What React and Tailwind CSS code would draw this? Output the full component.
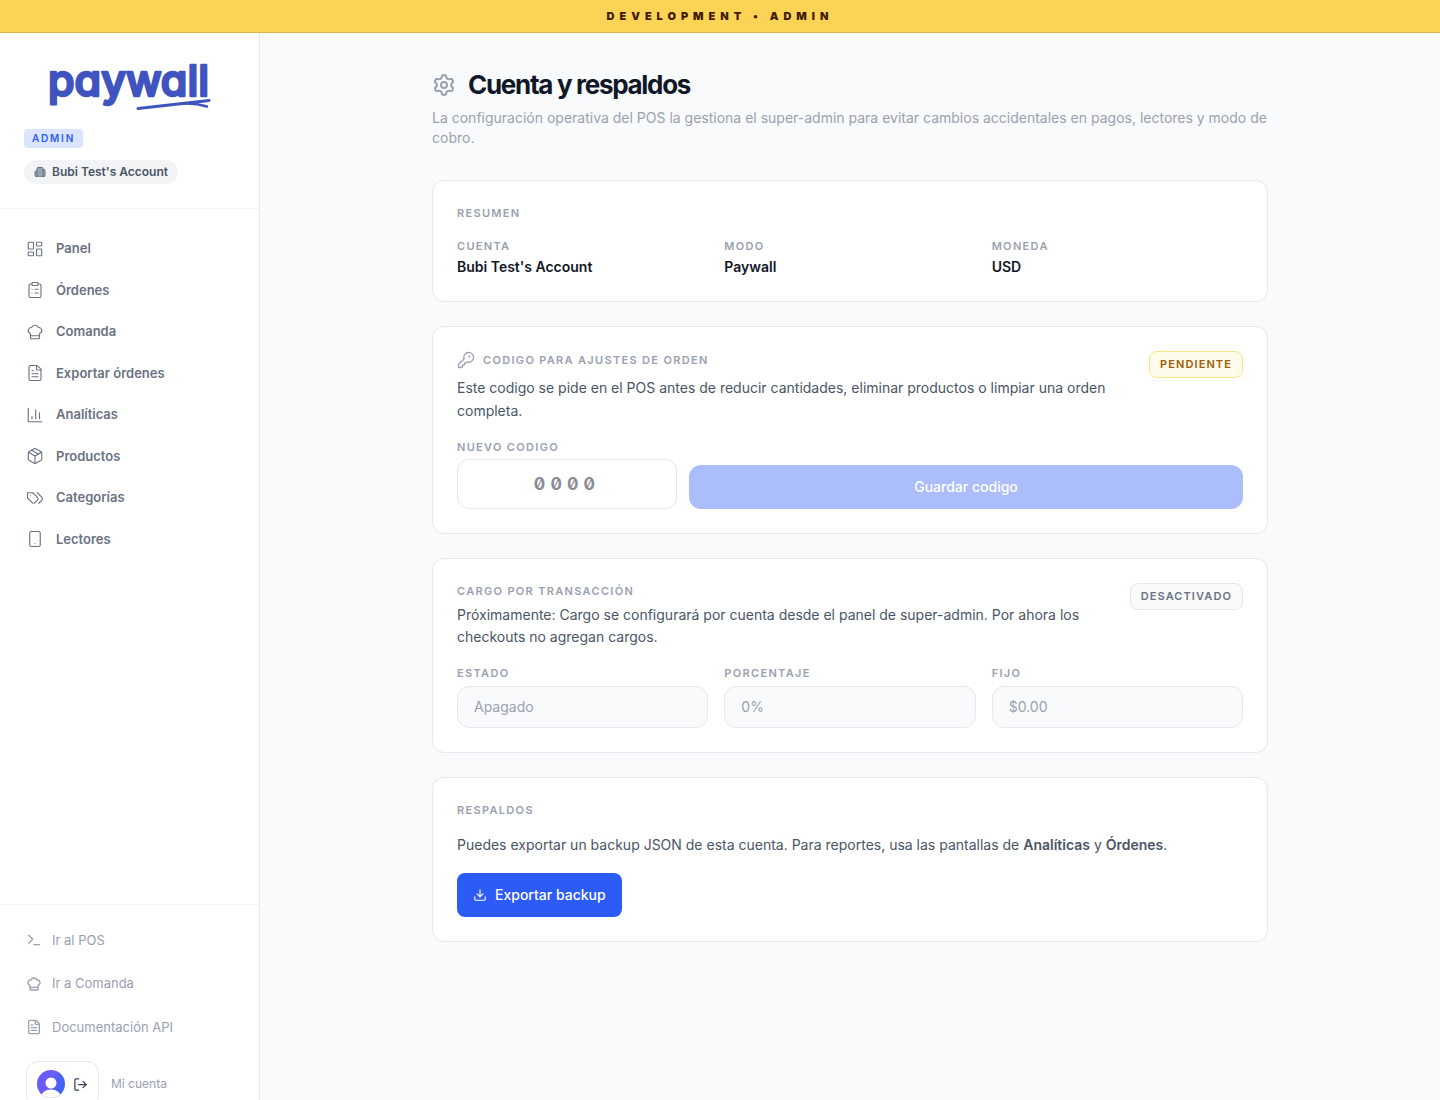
import {
  Building2,
  ChefHat,
  ClipboardList,
  Download,
  FileText,
  KeyRound,
  LayoutDashboard,
  LogOut,
  Package,
  Settings,
  Smartphone,
  Terminal,
} from 'lucide-react';

function ChartIcon({ size = 18, strokeWidth = 2 }) {
  return (
    <svg width={size} height={size} viewBox="0 0 24 24" fill="none" stroke="currentColor" strokeWidth={strokeWidth} strokeLinecap="round" strokeLinejoin="round">
      <path d="M3 3v18h18" />
      <path d="M18 17V9" />
      <path d="M13 17V5" />
      <path d="M8 17v-3" />
    </svg>
  );
}

function TagsIcon({ size = 18, strokeWidth = 2 }) {
  return (
    <svg width={size} height={size} viewBox="0 0 24 24" fill="none" stroke="currentColor" strokeWidth={strokeWidth} strokeLinecap="round" strokeLinejoin="round">
      <path d="M9 5H2v7l6.29 6.29c.94.94 2.48.94 3.42 0l3.58-3.58c.94-.94.94-2.48 0-3.42L9 5Z" />
      <path d="M6 9.01V9" />
      <path d="m15 5 6.3 6.3a2.4 2.4 0 0 1 0 3.4L17 19" />
    </svg>
  );
}

const navItems = [
  { label: 'Panel', icon: LayoutDashboard },
  { label: 'Órdenes', icon: ClipboardList },
  { label: 'Comanda', icon: ChefHat },
  { label: 'Exportar órdenes', icon: FileText },
  { label: 'Analíticas', icon: ChartIcon },
  { label: 'Productos', icon: Package },
  { label: 'Categorías', icon: TagsIcon },
  { label: 'Lectores', icon: Smartphone },
];

const footerItems = [
  { label: 'Ir al POS', icon: Terminal },
  { label: 'Ir a Comanda', icon: ChefHat },
  { label: 'Documentación API', icon: FileText },
];

const summary = [
  { label: 'Cuenta', value: "Bubi Test's Account" },
  { label: 'Modo', value: 'Paywall' },
  { label: 'Moneda', value: 'USD' },
];

const feeFields = [
  { id: 'estado', label: 'Estado', value: 'Apagado' },
  { id: 'porcentaje', label: 'Porcentaje', value: '0%' },
  { id: 'fijo', label: 'Fijo', value: '$0.00' },
];

function Logo() {
  return (
    <svg viewBox="0 0 168 56" className="mx-auto h-14 w-[168px] overflow-visible" role="img" aria-label="paywall">
      <text
        x="2"
        y="39"
        fontSize="43"
        fill="#3f54be"
        stroke="#3f54be"
        strokeWidth="2.5"
        strokeLinejoin="round"
        className="font-['Inter',sans-serif] font-medium [font-feature-settings:'cv11']"
      >
        paywall
      </text>
      <g fill="none" stroke="#3f54be" strokeLinecap="round">
        <path d="M92 51.5 L163 43.5" strokeWidth="3" />
        <path d="M138 46.5 Q150 46 161 49.5" strokeWidth="2.5" />
      </g>
    </svg>
  );
}

function Avatar() {
  return (
    <svg viewBox="0 0 28 28" className="size-7" aria-hidden="true">
      <defs>
        <linearGradient id="avatar-fill" x1="0" y1="0" x2="1" y2="0.4">
          <stop offset="0.5" stopColor="#6c5cf7" />
          <stop offset="1" stopColor="#3b63f6" />
        </linearGradient>
        <clipPath id="avatar-clip">
          <circle cx="14" cy="14" r="14" />
        </clipPath>
      </defs>
      <g clipPath="url(#avatar-clip)">
        <rect width="28" height="28" fill="url(#avatar-fill)" />
        <circle cx="14" cy="13" r="5.5" fill="#fff" />
        <ellipse cx="14" cy="27" rx="10" ry="7.5" fill="#fff" />
      </g>
    </svg>
  );
}

function Label({ as: Tag = 'p', className = '', ...props }) {
  return (
    <Tag
      className={`block text-[11px] leading-normal font-semibold tracking-[0.12em] text-gray-400 uppercase ${className}`}
      {...props}
    />
  );
}

function Card({ children }) {
  return <section className="rounded-xl border border-gray-200 bg-white p-6">{children}</section>;
}

function Sidebar() {
  return (
    <aside className="flex h-screen w-[260px] shrink-0 flex-col border-r border-gray-200 bg-white">
      <div className="flex flex-col items-start border-b border-gray-100 p-6">
        <Logo />
        <span className="mt-4 rounded bg-[#dbe6fe] px-2 py-0.5 text-[10px] leading-normal font-semibold tracking-[0.18em] text-[#2d5bf5]">
          ADMIN
        </span>
        <span className="mt-3 flex items-center gap-1.5 rounded-full bg-gray-100 px-2.5 py-1 text-xs font-semibold text-gray-600">
          <Building2 size={12} strokeWidth={2} className="fill-gray-400 text-gray-500" />
          Bubi Test's Account
        </span>
      </div>

      <nav className="flex flex-1 flex-col gap-0.5 px-3 py-5">
        {navItems.map(({ label, icon: Icon }) => (
          <a key={label} href="#" className="flex items-center gap-3 rounded-lg px-3.5 py-2.5 text-[13px] leading-normal font-semibold text-gray-500">
            <Icon size={18} strokeWidth={1.5} />
            {label}
          </a>
        ))}
      </nav>

      <div className="flex flex-col gap-1 border-t border-gray-100 p-4">
        {footerItems.map(({ label, icon: Icon }) => (
          <a key={label} href="#" className="flex items-center gap-2.5 px-2.5 py-2.5 text-[13px] leading-normal text-gray-400">
            <Icon size={16} strokeWidth={2} />
            {label}
          </a>
        ))}
        <div className="flex items-center gap-3 p-2.5">
          <button type="button" aria-label="Cerrar sesión" className="flex items-center gap-2 rounded-xl border border-gray-200 px-2.5 py-2 text-gray-700">
            <Avatar />
            <LogOut size={15} strokeWidth={2} />
          </button>
          <span className="text-xs text-gray-400">Mi cuenta</span>
        </div>
      </div>
    </aside>
  );
}

export default function App() {
  return (
    <div className="flex h-screen flex-col overflow-hidden bg-gray-50 font-['Inter',sans-serif] text-gray-900">
      <div className="shrink-0 border-b border-[#dcb64a] bg-[#fbd455] py-2 text-center text-[11px] leading-4 font-black tracking-[0.45em] text-[#451a03]">
        DEVELOPMENT • ADMIN
      </div>

      <div className="flex min-h-0 flex-1">
        <Sidebar />

        <main className="min-w-0 flex-1 overflow-y-auto">
          <div className="mx-auto max-w-[900px] p-8">
            <header className="mb-8">
              <div className="flex items-center gap-3">
                <Settings size={24} strokeWidth={2} className="text-gray-400" />
                <h1 className="text-[26px] leading-normal font-bold tracking-tighter">Cuenta y respaldos</h1>
              </div>
              <p className="mt-1 text-sm text-gray-400">
                La configuración operativa del POS la gestiona el super-admin para evitar cambios accidentales en pagos, lectores y modo de cobro.
              </p>
            </header>

            <div className="flex flex-col gap-6">
              <Card>
                <Label as="h2">Resumen</Label>
                <dl className="mt-4 grid grid-cols-3 gap-4">
                  {summary.map((item) => (
                    <div key={item.label}>
                      <Label as="dt">{item.label}</Label>
                      <dd className="mt-0.5 text-sm leading-normal font-semibold">{item.value}</dd>
                    </div>
                  ))}
                </dl>
              </Card>

              <Card>
                <div className="flex items-start justify-between gap-4">
                  <div>
                    <div className="flex items-center gap-2 text-gray-400">
                      <KeyRound size={18} strokeWidth={1.75} />
                      <Label as="h2">Codigo para ajustes de orden</Label>
                    </div>
                    <p className="mt-2 text-sm leading-relaxed text-gray-600">
                      Este codigo se pide en el POS antes de reducir cantidades, eliminar productos o limpiar una orden completa.
                    </p>
                  </div>
                  <span className="rounded-lg border border-amber-200 bg-amber-50 px-2.5 py-1 text-[11px] leading-normal font-semibold tracking-widest text-[#a15c07]">
                    PENDIENTE
                  </span>
                </div>
                <div className="mt-4 flex items-end gap-3">
                  <div className="w-[220px]">
                    <Label as="label" htmlFor="codigo">Nuevo codigo</Label>
                    <input
                      id="codigo"
                      placeholder="0000"
                      className="mt-1 h-[50px] w-full rounded-xl border border-gray-200 bg-white px-4 text-center text-[17px] font-bold tracking-[0.3em] slashed-zero placeholder:text-gray-900/50"
                    />
                  </div>
                  <button type="button" disabled className="h-11 flex-1 rounded-xl bg-[#abbdfb] text-sm font-medium text-white">
                    Guardar codigo
                  </button>
                </div>
              </Card>

              <Card>
                <div className="flex items-start justify-between gap-4">
                  <div>
                    <Label as="h2">Cargo por transacción</Label>
                    <p className="mt-1 text-sm leading-relaxed text-gray-600">
                      Próximamente: Cargo se configurará por cuenta desde el panel de super-admin. Por ahora los checkouts no agregan cargos.
                    </p>
                  </div>
                  <span className="rounded-lg border border-gray-200 bg-gray-50 px-2.5 py-1 text-[11px] leading-normal font-semibold tracking-widest text-gray-500">
                    DESACTIVADO
                  </span>
                </div>
                <div className="mt-4 grid grid-cols-3 gap-4">
                  {feeFields.map((field) => (
                    <div key={field.id}>
                      <Label as="label" htmlFor={field.id}>{field.label}</Label>
                      <input
                        id={field.id}
                        defaultValue={field.value}
                        disabled
                        className="mt-1 h-[42px] w-full rounded-xl border border-gray-200 bg-gray-50 px-4 text-sm text-gray-400"
                      />
                    </div>
                  ))}
                </div>
              </Card>

              <Card>
                <Label as="h2">Respaldos</Label>
                <p className="mt-4 text-sm leading-relaxed text-gray-600">
                  Puedes exportar un backup JSON de esta cuenta. Para reportes, usa las pantallas de{' '}
                  <strong className="font-semibold">Analíticas</strong> y <strong className="font-semibold">Órdenes</strong>.
                </p>
                <button type="button" className="mt-4 flex h-11 items-center gap-2 rounded-lg bg-[#2d5bf5] px-4 text-sm font-medium text-white">
                  <Download size={14} strokeWidth={2} />
                  Exportar backup
                </button>
              </Card>
            </div>
          </div>
        </main>
      </div>
    </div>
  );
}
